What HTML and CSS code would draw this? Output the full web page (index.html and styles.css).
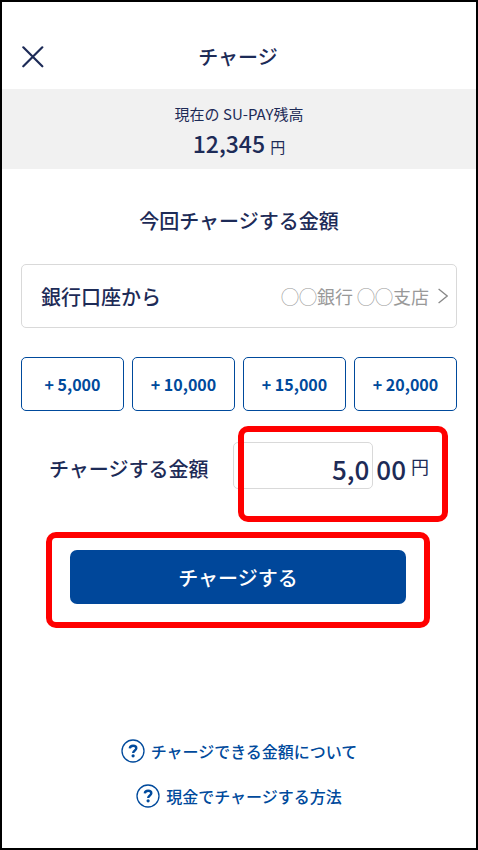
FILE: index.html
```html
<!DOCTYPE html>
<html lang="ja">
<head>
    <meta charset="UTF-8">
    <meta name="viewport" content="width=device-width, initial-scale=1.0">
    <title>チャージ</title>
    <link rel="stylesheet" href="styles.css">
</head>
<body>
    <header class="header">
        <button type="button" class="close-btn" aria-label="閉じる">
            <svg width="22" height="22" viewBox="0 0 22 22" fill="none" stroke="currentColor" stroke-width="2.2" stroke-linecap="round">
                <path d="M1.3 1.3L20.3 20.3M20.3 1.3L1.3 20.3"/>
            </svg>
        </button>
        <h1>チャージ</h1>
    </header>

    <section class="balance">
        <p class="balance-label">現在の SU-PAY残高</p>
        <p class="balance-amount">12,345 <span class="yen">円</span></p>
    </section>

    <main class="content">
        <h2>今回チャージする金額</h2>

        <button type="button" class="account">
            <span class="account-type">銀行口座から</span>
            <span class="account-name">◯◯銀行 ◯◯支店</span>
            <svg width="10" height="16" viewBox="0 0 10 16" fill="none" stroke="currentColor" stroke-width="1.3">
                <path d="M0.6 1L9.2 8L0.6 15"/>
            </svg>
        </button>

        <div class="quick">
            <button type="button">+ 5,000</button>
            <button type="button">+ 10,000</button>
            <button type="button">+ 15,000</button>
            <button type="button">+ 20,000</button>
        </div>

        <form>
            <div class="amount">
                <label for="amount">チャージする金額</label>
                <div class="amount-field">
                    <input type="text" id="amount" inputmode="numeric" value="5,0">
                    <span class="amount-fixed">00</span>
                    <span class="amount-unit">円</span>
                </div>
            </div>

            <div class="submit-frame">
                <button type="submit" class="submit-btn">チャージする</button>
            </div>
        </form>

        <nav class="help">
            <a href="#">
                <svg width="24" height="24" viewBox="0 0 24 24" fill="none" stroke="currentColor">
                    <circle cx="12" cy="12" r="11" stroke-width="1.3"/>
                    <path d="M8.8 9.4C9 7.7 10.2 6.8 12.1 6.8C14 6.8 15.3 7.8 15.3 9.3C15.3 11.5 12.2 11.5 12.2 14" stroke-width="2.4"/>
                    <circle cx="12.1" cy="16.8" r="1.6" fill="currentColor" stroke="none"/>
                </svg>
                チャージできる金額について
            </a>
            <a href="#">
                <svg width="24" height="24" viewBox="0 0 24 24" fill="none" stroke="currentColor">
                    <circle cx="12" cy="12" r="11" stroke-width="1.3"/>
                    <path d="M8.8 9.4C9 7.7 10.2 6.8 12.1 6.8C14 6.8 15.3 7.8 15.3 9.3C15.3 11.5 12.2 11.5 12.2 14" stroke-width="2.4"/>
                    <circle cx="12.1" cy="16.8" r="1.6" fill="currentColor" stroke="none"/>
                </svg>
                現金でチャージする方法
            </a>
        </nav>
    </main>
</body>
</html>
```
FILE: styles.css
```css
* {
    box-sizing: border-box;
}
body {
    margin: 0;
    min-height: 100vh;
    border: 2px solid #000;
    background-color: #fff;
    color: #1d2b57;
    font-family: "Noto Sans CJK JP", sans-serif;
    font-weight: 500;
}
h1, h2, p {
    margin: 0;
}
h1, h2 {
    font-size: 20px;
    font-weight: 500;
    line-height: 30px;
    text-align: center;
}
button, input {
    font: inherit;
    color: inherit;
    background: none;
    border: none;
    padding: 0;
}
button {
    cursor: pointer;
}

/* ヘッダー */
.header {
    display: grid;
    grid-template-columns: 22px 1fr 24px;
    align-items: center;
    padding: 40px 20px 17px;
}
.close-btn {
    height: 22px;
}
.close-btn svg {
    display: block;
}

/* 残高 */
.balance {
    height: 80px;
    padding-top: 13px;
    background-color: #f1f1f1;
    text-align: center;
}
.balance-label {
    font-size: 15px;
    font-weight: 400;
    line-height: 24px;
}
.balance-amount {
    font-size: 23px;
    line-height: 34px;
}
.yen {
    font-size: 15px;
    font-weight: 400;
}

.content {
    padding: 37px 19px 0;
}

/* 口座選択 */
.account {
    display: flex;
    align-items: center;
    width: 100%;
    height: 64px;
    margin-top: 28px;
    padding: 0 8px 0 19px;
    border: 1px solid #d9d9d9;
    border-radius: 5px;
}
.account-type {
    font-size: 20px;
}
.account-name {
    margin-left: auto;
    margin-right: 9px;
    font-size: 18px;
    font-weight: 400;
    color: #999;
}
.account svg {
    color: #888;
}

/* クイック入力 */
.quick {
    display: grid;
    grid-template-columns: repeat(4, 1fr);
    gap: 8px;
    margin-top: 29px;
}
.quick button {
    height: 54px;
    border: 1px solid #004a9c;
    border-radius: 5px;
    color: #004a9c;
    font-size: 16px;
    font-weight: 700;
}

/* 金額入力 */
.amount {
    display: flex;
    align-items: center;
    justify-content: space-between;
    margin-top: 31px;
    padding: 0 28px;
}
.amount label {
    padding-top: 6px;
    font-size: 20px;
}
.amount-field {
    position: relative;
    display: flex;
    align-items: center;
    font-size: 26px;
}
.amount-field::after {
    content: "";
    position: absolute;
    inset: -16px -19px -33px 5px;
    border: 6px solid #f00;
    border-radius: 10px;
    pointer-events: none;
}
.amount-field input {
    width: 140px;
    height: 47px;
    padding: 6px 3px 0 0;
    border: 1px solid #d9d9d9;
    border-radius: 5px;
    text-align: right;
}
.amount-fixed {
    padding-top: 6px;
    margin-left: 3px;
}
.amount-unit {
    margin-left: 5px;
    font-size: 18px;
    font-weight: 400;
}

/* 送信ボタン */
.submit-frame {
    margin: 43px 27px 0 25px;
    padding: 12px 18px 18px;
    border: 6px solid #f00;
    border-radius: 10px;
}
.submit-btn {
    display: block;
    width: 100%;
    height: 54px;
    border-radius: 7px;
    background-color: #00479a;
    color: #fff;
    font-size: 20px;
}

/* ヘルプ */
.help {
    display: flex;
    flex-direction: column;
    align-items: center;
    gap: 21px;
    margin-top: 111px;
}
.help a {
    display: flex;
    align-items: center;
    gap: 6px;
    color: #004a9c;
    font-size: 16px;
    line-height: 24px;
    text-decoration: none;
}
```
